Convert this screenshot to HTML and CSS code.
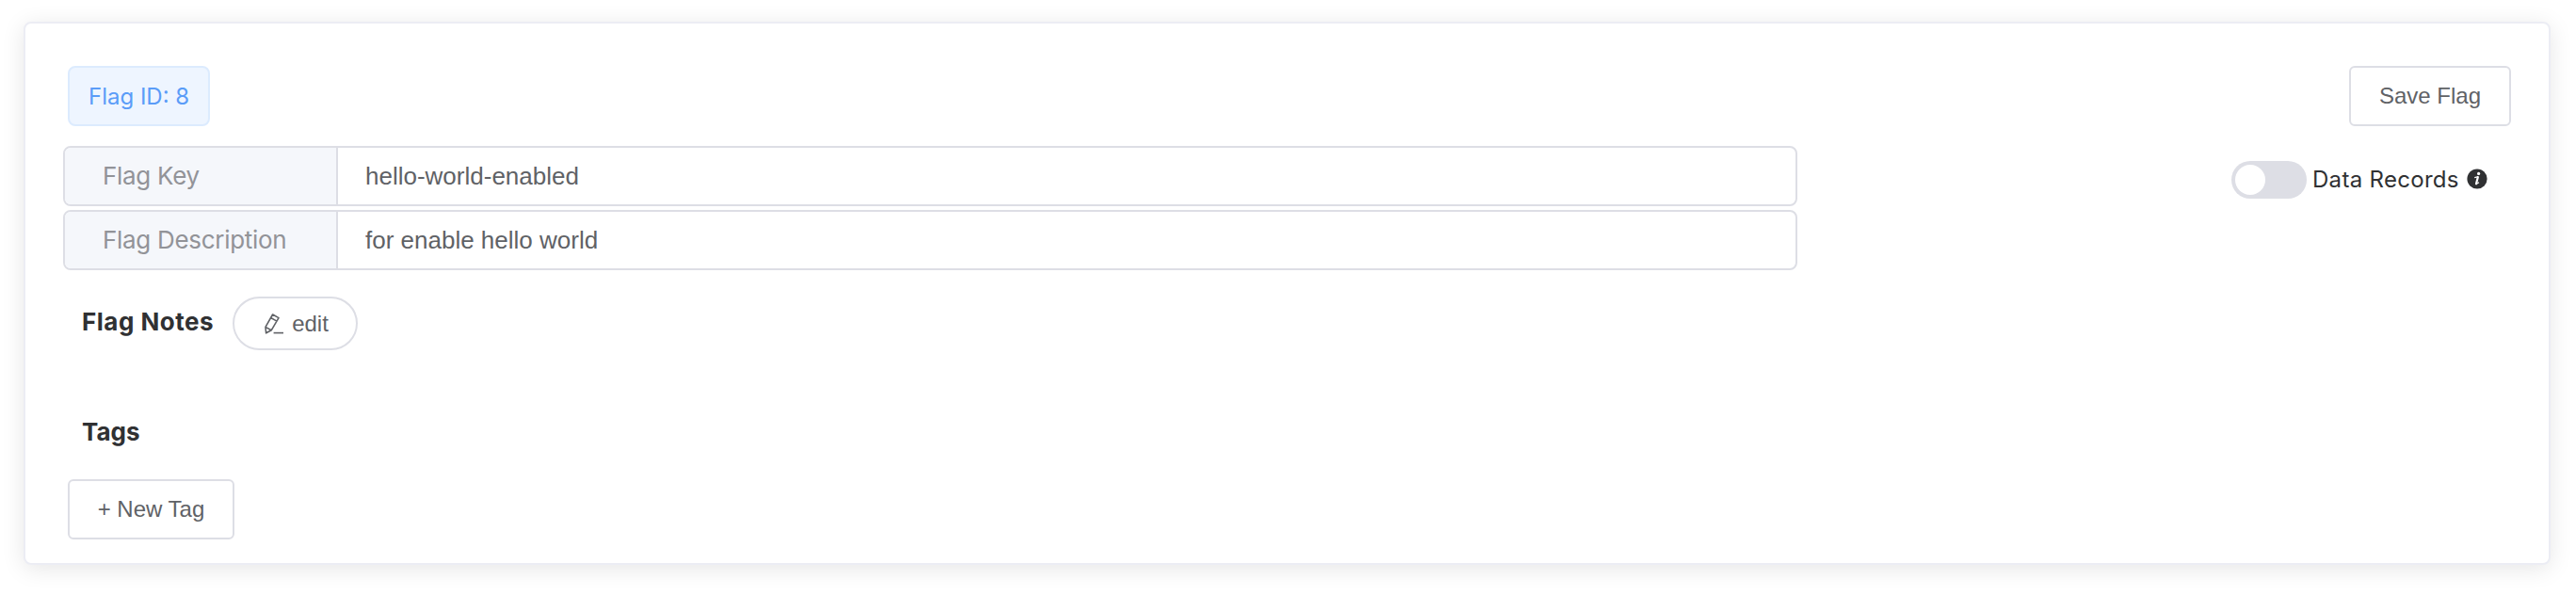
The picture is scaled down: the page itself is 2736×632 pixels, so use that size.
FILE: index.html
```html
<!DOCTYPE html>
<html lang="en">
<head>
<meta charset="utf-8">
<title>Flag</title>
<link rel="stylesheet" href="styles.css">
</head>
<body>
<main class="card">
  <header class="card-head">
    <span class="tag">Flag ID: 8</span>
    <button class="btn btn-save">Save Flag</button>
  </header>
  <section class="settings">
    <div class="fields">
      <div class="field"><span class="label">Flag Key</span><span class="value">hello-world-enabled</span></div>
      <div class="field"><span class="label">Flag Description</span><span class="value">for enable hello world</span></div>
    </div>
    <div class="records">
      <span class="switch"><span class="knob"></span></span>
      <span class="records-text">Data Records</span>
      <svg class="info" viewBox="0 0 22 22"><circle cx="11" cy="11" r="10.6" fill="#303133"/><circle cx="12.6" cy="5.4" r="1.6" fill="#fff"/><path d="M8.2 9.6 L12.4 8.6 M9.6 16.8 L13 14.8" fill="none" stroke="#fff" stroke-width="1.1"/><path d="M11.8 9.2 L10 16.2" stroke="#fff" stroke-width="2.2" stroke-linecap="round"/></svg>
    </div>
  </section>
  <section class="notes">
    <h2 class="title title-notes">Flag Notes</h2>
    <button class="btn btn-edit">
      <svg class="pencil" viewBox="0 0 20 22" fill="none" stroke="#606266" stroke-width="1.6" stroke-linejoin="round"><path d="M8.6 1 L15 4.6 L7.2 17.8 L1.6 20.8 L1 14.4 Z M6.6 4.5 L13 8.1 M1 14.4 L7.2 17.8"/><path d="M9.6 20.6 H20"/></svg>
      <span>edit</span>
    </button>
  </section>
  <h2 class="title title-tags">Tags</h2>
  <button class="btn btn-new">+ New Tag</button>
</main>
</body>
</html>
```
FILE: styles.css
```css
* { box-sizing: border-box; }

body {
  margin: 0;
  padding: 23px 27px 32px 25px;
  background: #fff;
  color: #303133;
  font-family: Inter, "Open Sans", sans-serif;
}

.card {
  height: 577px;
  padding: 45px 40px 25px;
  border: 2px solid #ecedf4;
  border-radius: 8px;
  background: #fff;
  box-shadow: 0 4px 24px rgba(0, 0, 0, 0.1);
}

.card-head {
  display: flex;
  justify-content: space-between;
  height: 64px;
  padding-left: 5px;
}

.tag {
  display: flex;
  align-items: center;
  width: 151px;
  height: 64px;
  padding-left: 20px;
  border: 2px solid #dcebfe;
  border-radius: 8px;
  background: #eef5ff;
  color: #5a9cf8;
  font-size: 24px;
  white-space: nowrap;
}

.btn {
  display: flex;
  align-items: center;
  justify-content: center;
  height: 64px;
  padding: 0;
  border: 2px solid #dddee5;
  border-radius: 6px;
  background: #fff;
  color: #606266;
  font: 24px "Liberation Sans", Arial, sans-serif;
  white-space: nowrap;
}

.btn-save { width: 172px; }
.btn-new { width: 177px; margin-left: 5px; }

.settings {
  display: flex;
  justify-content: space-between;
  margin-top: 21px;
}

.fields {
  display: flex;
  flex-direction: column;
  gap: 4px;
  width: 1842px;
}

.field {
  display: flex;
  height: 64px;
  border: 2px solid #dddee5;
  border-radius: 8px;
  background: #fff;
  overflow: hidden;
  line-height: 60px;
  white-space: nowrap;
}

.label {
  width: 290px;
  padding-left: 40px;
  border-right: 2px solid #dddee5;
  background: #f5f7fb;
  color: #929398;
  font-size: 26px;
  letter-spacing: -0.3px;
}

.value {
  padding-left: 29px;
  color: #606266;
  font: 26px/60px "Liberation Sans", Arial, sans-serif;
}

.records {
  display: flex;
  align-items: center;
  width: 297px;
  height: 40px;
  margin-top: 16px;
  font-size: 24px;
  white-space: nowrap;
}

.switch {
  display: flex;
  align-items: center;
  width: 80px;
  height: 40px;
  padding-left: 4px;
  border-radius: 20px;
  background: #dddee5;
}

.knob {
  width: 32px;
  height: 32px;
  border-radius: 50%;
  background: #fff;
}

.records-text {
  width: 162px;
  margin: -1px 0 0 6px;
  letter-spacing: 0.3px;
}

.info { width: 22px; height: 22px; margin: -2px 0 0 2px; }

.notes {
  display: flex;
  height: 57px;
  margin-top: 28px;
  padding-left: 20px;
}

.title {
  margin: 0;
  font-size: 26px;
  font-weight: 700;
  line-height: 32px;
  white-space: nowrap;
}

.title-notes { width: 160px; margin-top: 11px; letter-spacing: 0.5px; }
.title-tags { margin: 71px 0 34px 20px; }

.btn-edit {
  width: 133px;
  height: 57px;
  gap: 9px;
  padding-left: 3px;
  border-radius: 29px;
}

.pencil { width: 20px; height: 22px; }
```
